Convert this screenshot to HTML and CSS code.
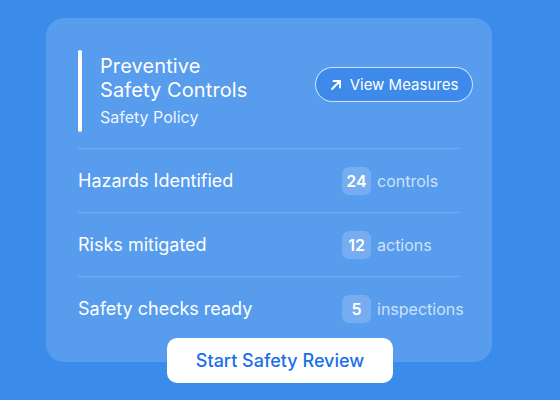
FILE: index.html
```html
<!DOCTYPE html>
<html>
<head>
<meta charset="utf-8">
<link rel="stylesheet" href="styles.css">
</head>
<body>
<div class="wrap">
  <section class="card">
    <header class="head">
      <div class="accent"></div>
      <div class="titles">
        <h1 class="title">Preventive<br>Safety Controls</h1>
        <div class="subtitle">Safety Policy</div>
      </div>
      <button class="measures">
        <svg class="arrow" viewBox="0 0 12 12" width="12" height="12"><path d="M2 10L10 2M3.5 2H10V8.5" fill="none" stroke="#fff" stroke-width="2" stroke-linecap="round" stroke-linejoin="round"/></svg>
        View Measures
      </button>
    </header>
    <div class="rows">
      <div class="row">
        <span class="label">Hazards Identified</span>
        <span class="stat"><span class="badge">24</span><span class="unit">controls</span></span>
      </div>
      <div class="row">
        <span class="label">Risks mitigated</span>
        <span class="stat"><span class="badge">12</span><span class="unit">actions</span></span>
      </div>
      <div class="row">
        <span class="label">Safety checks ready</span>
        <span class="stat"><span class="badge">5</span><span class="unit">inspections</span></span>
      </div>
    </div>
  </section>
  <button class="start">Start Safety Review</button>
</div>
</body>
</html>
```
FILE: styles.css
```css
html, body {
  margin: 0;
  height: 100%;
}
body {
  background: #3b8beb;
  font-family: Inter, "Noto Sans", sans-serif;
  color: #fff;
}
.wrap {
  padding: 18px 0 0 46px;
  width: 446px;
  display: flex;
  flex-direction: column;
  align-items: center;
}
.card {
  box-sizing: border-box;
  width: 446px;
  background: rgba(255, 255, 255, 0.15);
  border-radius: 18px;
  padding: 32px 33px 22px 32px;
}
.head {
  display: flex;
  align-items: flex-start;
  height: 82px;
  margin-bottom: 16px;
}
.accent {
  width: 4px;
  height: 82px;
  border-radius: 2px;
  background: #fff;
  margin-right: 18px;
}
.titles {
  flex: 1;
  padding-top: 4px;
}
.title {
  margin: 0;
  font-size: 20px;
  font-weight: 400;
  line-height: 24px;
  letter-spacing: 0.1px;
}
.subtitle {
  margin-top: 5px;
  font-size: 16px;
  line-height: 20px;
  color: rgba(255, 255, 255, 0.92);
}
.measures {
  margin-top: 17px;
  margin-right: -14px;
  height: 35px;
  width: 158px;
  border-radius: 18px;
  border: 1px solid rgba(255, 255, 255, 0.75);
  background: #3d8aea;
  color: #fff;
  font-family: inherit;
  font-size: 15px;
  display: flex;
  align-items: center;
  justify-content: center;
  gap: 8px;
  padding: 0;
}
.rows {
  border-top: 1px solid rgba(255, 255, 255, 0.2);
}
.row {
  height: 63px;
  display: flex;
  align-items: center;
  justify-content: space-between;
  border-bottom: 1px solid rgba(255, 255, 255, 0.2);
}
.row:last-child {
  border-bottom: none;
}
.label {
  font-size: 18px;
  font-weight: 400;
}
.stat {
  display: flex;
  align-items: center;
  width: 117px;
  flex-shrink: 0;
}
.badge {
  flex-shrink: 0;
  width: 29px;
  height: 28px;
  border-radius: 7px;
  background: rgba(255, 255, 255, 0.18);
  display: flex;
  align-items: center;
  justify-content: center;
  font-size: 16px;
  font-weight: 600;
  margin-right: 6px;
}
.unit {
  font-size: 16px;
  white-space: nowrap;
  color: rgba(255, 255, 255, 0.72);
}
.start {
  margin-top: -24px;
  margin-left: 22px;
  width: 226px;
  height: 45px;
  border: none;
  border-radius: 10px;
  background: #fff;
  color: #1a6fe8;
  font-family: inherit;
  font-size: 18px;
  font-weight: 500;
}
```
